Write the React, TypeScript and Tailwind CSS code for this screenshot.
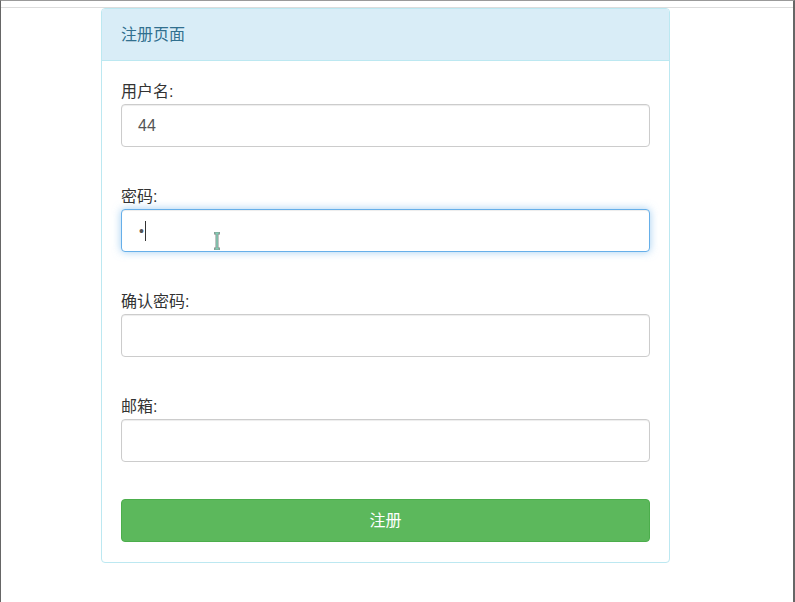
import React from "react";

const font = { fontFamily: '"Liberation Sans", "Noto Sans CJK SC", sans-serif' };

function Label({ children }: { children: React.ReactNode }) {
  return <div className="text-[16px] leading-[22px] text-[#333] mb-px">{children}</div>;
}

function Field({ label, children, focused }: { label: string; children?: React.ReactNode; focused?: boolean }) {
  return (
    <div>
      <Label>{label}</Label>
      <div
        className={
          "h-[43px] rounded-[4px] border bg-white flex items-center pl-[16px] text-[16px] text-[#555] " +
          (focused
            ? "border-[#66afe9] shadow-[inset_0_1px_1px_rgba(0,0,0,0.075),0_0_8px_rgba(102,175,233,0.6)]"
            : "border-[#ccc] shadow-[inset_0_1px_1px_rgba(0,0,0,0.075)]")
        }
      >
        {children}
      </div>
    </div>
  );
}

export default function App() {
  return (
    <div style={font} className="w-[795px] h-[602px] bg-white border-t border-t-[#9a9a9a] border-l border-l-[#666] border-r-2 border-r-[#666] overflow-hidden">
      <div className="mt-[6px] border-t border-[#dcdcdc]">
        <div className="ml-[100px] w-[569px] border border-[#bce8f1] rounded-[4px] bg-white">
          <div className="h-[52px] bg-[#d9edf7] border-b border-[#bce8f1] rounded-t-[3px] flex items-center px-[19px] text-[16px] text-[#31708f]">
            注册页面
          </div>
          <div className="px-[19px] pt-[20px] pb-[20px] flex flex-col gap-[39px]">
            <Field label="用户名:">44</Field>
            <Field label="密码:" focused>
              <div className="relative flex items-center w-full h-full">
                <span className="text-[#555] text-[14px] leading-none ml-[1px]">•</span>
                <span className="ml-px w-px h-[20px] bg-[#333]" />
                <svg className="absolute left-[75px] top-[22px]" width="8" height="18" viewBox="0 0 8 18">
                  <path d="M1 1h6M4 1v16M1 17h6" stroke="#888" strokeWidth="3" fill="none" />
                  <path d="M1.5 1h5M4 1v16M1.5 17h5" stroke="#7fe0c0" strokeWidth="1.2" fill="none" />
                </svg>
              </div>
            </Field>
            <Field label="确认密码:" />
            <div>
              <Field label="邮箱:" />
              <div className="mt-[37px] h-[43px] rounded-[4px] bg-[#5cb85c] border border-[#4cae4c] flex items-center justify-center text-white text-[16px]">
                注册
              </div>
            </div>
          </div>
        </div>
      </div>
    </div>
  );
}
